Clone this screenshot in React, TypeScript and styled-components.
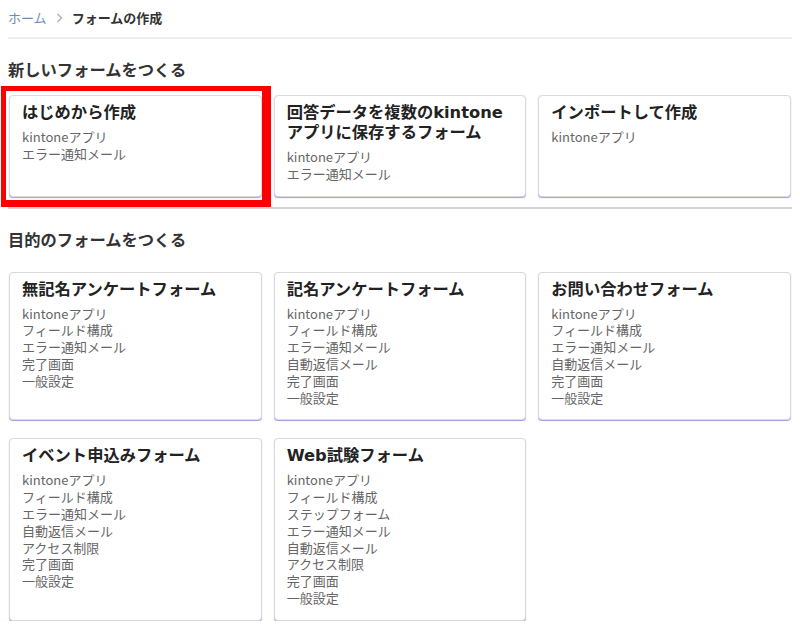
import React from 'react';
import styled, { createGlobalStyle } from 'styled-components';

interface FormTemplate {
  title: string;
  items: string[];
  highlighted?: boolean;
}

const GlobalStyle = createGlobalStyle`
  body {
    margin: 0;
    background: #ffffff;
    color: #333333;
    font-family: "Noto Sans CJK JP", "Noto Sans", sans-serif;
  }
`;

const Page = styled.div`
  padding: 8px 8px 0;
`;

const Breadcrumb = styled.nav`
  display: flex;
  align-items: center;
  gap: 9px;
  font-size: 13px;
  line-height: 20px;
`;

const CrumbLink = styled.a`
  color: #6a8cbc;
  text-decoration: none;
`;

const CrumbCurrent = styled.span`
  font-weight: bold;
  color: #333333;
`;

const TopRule = styled.div`
  height: 2px;
  background: #ececec;
  margin-top: 9px;
`;

const SectionTitle = styled.h2<{ $after: number }>`
  margin: 20px 0 ${props => props.$after}px;
  font-family: "DejaVu Sans", "Noto Sans CJK JP", sans-serif;
  font-size: 16.3px;
  line-height: 24px;
  font-weight: bold;
  color: #333333;
`;

const Divider = styled.div`
  height: 2px;
  background: #d2d2d2;
  margin-top: 10px;
`;

const CardGrid = styled.div`
  display: grid;
  grid-template-columns: repeat(3, 1fr);
  column-gap: 12px;
  row-gap: 18px;
  padding: 0 1px;
`;

const Card = styled.div`
  position: relative;
  border: 1px solid #dadada;
  border-radius: 4px;
  background: #ffffff;
  box-shadow: 0 1px 1px rgba(110, 90, 200, 0.6);
  padding: 7px 12px 13px;
`;

const CardTitle = styled.div`
  font-family: "DejaVu Sans", "Noto Sans CJK JP", sans-serif;
  font-size: 16.3px;
  line-height: 20px;
  font-weight: bold;
  color: #222222;
  margin-bottom: 6px;
`;

const CardItem = styled.div`
  font-size: 13px;
  line-height: 16.8px;
  color: #666666;
`;

// 画像上の赤枠（注釈）
const Highlight = styled.div`
  position: absolute;
  top: -10px;
  left: -9px;
  right: -10px;
  bottom: -11px;
  border-style: solid;
  border-color: #ff0000;
  border-width: 5px 9px 7px 5px;
  pointer-events: none;
`;

const Chevron = () => (
  <svg width="7" height="10" viewBox="0 0 7 10" fill="none">
    <polyline points="1.5,1 5.5,5 1.5,9" stroke="#b0b0b0" strokeWidth="1.4" />
  </svg>
);

const newForms: FormTemplate[] = [
  { title: 'はじめから作成', items: ['kintoneアプリ', 'エラー通知メール'], highlighted: true },
  { title: '回答データを複数のkintoneアプリに保存するフォーム', items: ['kintoneアプリ', 'エラー通知メール'] },
  { title: 'インポートして作成', items: ['kintoneアプリ'] },
];

const purposeForms: FormTemplate[] = [
  {
    title: '無記名アンケートフォーム',
    items: ['kintoneアプリ', 'フィールド構成', 'エラー通知メール', '完了画面', '一般設定'],
  },
  {
    title: '記名アンケートフォーム',
    items: ['kintoneアプリ', 'フィールド構成', 'エラー通知メール', '自動返信メール', '完了画面', '一般設定'],
  },
  {
    title: 'お問い合わせフォーム',
    items: ['kintoneアプリ', 'フィールド構成', 'エラー通知メール', '自動返信メール', '完了画面', '一般設定'],
  },
  {
    title: 'イベント申込みフォーム',
    items: ['kintoneアプリ', 'フィールド構成', 'エラー通知メール', '自動返信メール', 'アクセス制限', '完了画面', '一般設定'],
  },
  {
    title: 'Web試験フォーム',
    items: ['kintoneアプリ', 'フィールド構成', 'ステップフォーム', 'エラー通知メール', '自動返信メール', 'アクセス制限', '完了画面', '一般設定'],
  },
];

const TemplateCard: React.FC<{ form: FormTemplate }> = ({ form }) => (
  <Card>
    <CardTitle>{form.title}</CardTitle>
    {form.items.map(item => (
      <CardItem key={item}>{item}</CardItem>
    ))}
    {form.highlighted && <Highlight />}
  </Card>
);

const App: React.FC = () => {
  return (
    <>
      <GlobalStyle />
      <Page>
        <Breadcrumb>
          <CrumbLink href="#">ホーム</CrumbLink>
          <Chevron />
          <CrumbCurrent>フォームの作成</CrumbCurrent>
        </Breadcrumb>
        <TopRule />

        <SectionTitle $after={12}>新しいフォームをつくる</SectionTitle>
        <CardGrid>
          {newForms.map(form => (
            <TemplateCard key={form.title} form={form} />
          ))}
        </CardGrid>
        <Divider />

        <SectionTitle $after={19}>目的のフォームをつくる</SectionTitle>
        <CardGrid>
          {purposeForms.map(form => (
            <TemplateCard key={form.title} form={form} />
          ))}
        </CardGrid>
      </Page>
    </>
  );
};

export default App;
